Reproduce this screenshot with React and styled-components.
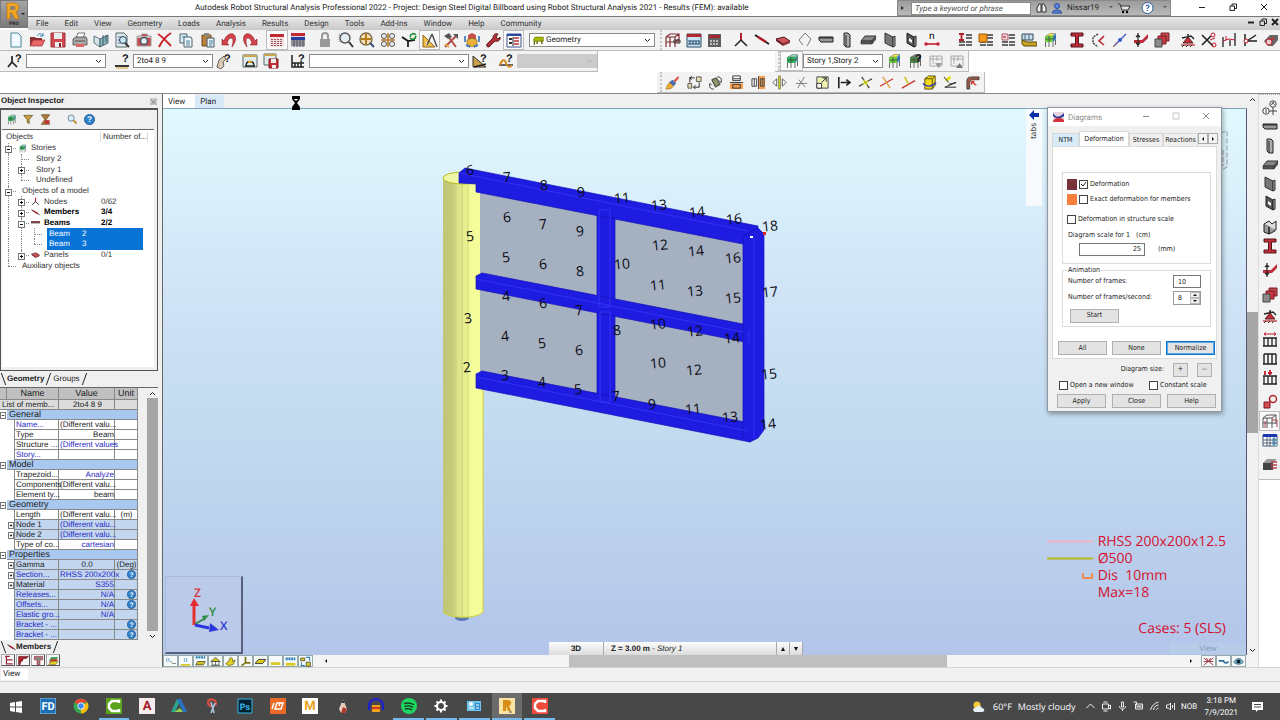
import React from 'react';
import styled, { createGlobalStyle, css } from 'styled-components';

const ui = "Roboto, 'Open Sans', sans-serif";
const dialogFont = "'DejaVu Sans Condensed', 'Open Sans', sans-serif";
const classic = "'Liberation Sans', Arial, sans-serif";
const wide = "'Open Sans', 'Noto Sans', sans-serif";

const GlobalStyle = createGlobalStyle`
  * { box-sizing: border-box; }
  body {
    margin: 0;
    background: #f0f0f0;
    color: #222;
    font-family: ${ui};
    font-size: 8px;
    line-height: 10px;
    text-rendering: geometricPrecision;
  }
  button, input, select { font: inherit; color: inherit; margin: 0; padding: 0; border-radius: 0; text-rendering: inherit; }
  button { background: none; border: 0; white-space: nowrap; }
`;

/* ---------- icons ---------- */

const building = (a, b, c) => (
  <>
    <path d="M4 4 8 1.500h5.500L10 4Z" fill={a} stroke="#444" strokeWidth=".4" />
    <path d="M3 4h8v6H3Z" fill={b} />
    <path d="M11 4l3-2.500v6L11 10Z" fill={c} />
    <path d="M3 7h8l3-2.500M7 4v6M3.500 10v5M7 10v5M11 10v5M13.500 8v5" stroke="#444" strokeWidth=".8" fill="none" />
  </>
);

const question = (
  <text x="8" y="9" fontSize="11" fontWeight="bold" fontFamily="Liberation Sans" fill="#111">?</text>
);

const stackRows = (
  <path d="M9 3h6M9 6h6M2 10h6M9 10h6M2 13h6M9 13h6" stroke="#666" strokeWidth="2" fill="none" />
);

const loadComb = <path d="M2 6v8h12V6M6 6v8M10 6v8M1 6h14M1 14h14" stroke="#222" strokeWidth="1.300" fill="none" />;

const drawings = {
  newFile: <path d="M3 1h7l3 3v11H3Z" fill="#f2fbff" stroke="#4b8298" />,
  open: <><path d="M1 5h5l1 1h6v8H1Z" fill="#8e3234" /><path d="M4 8h12l-3 6H1Z" fill="#e9666a" stroke="#8b2326" strokeWidth=".6" /><path d="M8 4c2-3 4-3 6 0M14 1v3h-3" fill="none" stroke="#3b82b4" /></>,
  save: <><path d="M1 1h14v14H1Z" fill="#d0484d" stroke="#9d3338" /><path d="M4 1h8v6H4ZM5 10h7v5H5Z" fill="#e9eef1" /><path d="M9 11h2v4H9Z" fill="#823" /></>,
  print: <><path d="M4 6l2-5h7l-2 5" fill="#fff" stroke="#555" strokeWidth=".8" /><path d="M1 7l3-2h10l1 2v6H1Z" fill="#a9a9a9" stroke="#444" strokeWidth=".8" /><path d="M3 9h10" stroke="#555" /><path d="M4 12h8v3H4Z" fill="#d66" /></>,
  report: <><path d="M1 4l6 3v8l-6-4Z" fill="#d5e4e7" stroke="#456" strokeWidth=".8" /><path d="M7 7l8-4v8l-8 4Z" fill="#8fb3bb" stroke="#356" strokeWidth=".8" /><path d="M10 3v10M13 3v7" stroke="#355c66" /></>,
  preview: <><path d="M2 1h8l3 3v11H2Z" fill="#e1eaee" stroke="#566" /><path d="M4 5h5M4 8h3M4 11h3" stroke="#57a" /><circle cx="9" cy="8" r="3.500" fill="#c3e4f2" stroke="#345" /><path d="M11 11l4 4" stroke="#333" strokeWidth="2" /></>,
  camera: <><path d="M1 4h4l1-2h5l1 2h3v10H1Z" fill="#cf4b50" stroke="#9a9a9a" /><path d="M1 4h14v2H1Z" fill="#bbb" /><circle cx="8" cy="9" r="3.500" fill="#e6f2f6" stroke="#456" strokeWidth="1.500" /></>,
  remove: <path d="M1 2c5 3 9 8 13 12M14 1C9 4 5 9 2 15" stroke="#c8242c" strokeWidth="2" fill="none" />,
  copy: <><path d="M2 2h7v9H2Z" fill="#dbeaf0" stroke="#4d6570" /><path d="M6 5h7l1 2v8H6Z" fill="#eef6f9" stroke="#4d6570" /><path d="M8 9h4M8 11h4M8 13h4M4 5h3" stroke="#467ea0" /></>,
  paste: <><path d="M2 3h9v11H2Z" fill="#b9823c" stroke="#754a1b" /><path d="M4 1h5v3H4Z" fill="#888" /><path d="M7 6h7v9H7Z" fill="#e9f2f6" stroke="#456" /><path d="M9 9h4M9 11h4M9 13h3" stroke="#467ea0" /></>,
  undo: <path d="M1 13V7l2 2C5 3 9 1 12 2c4 2 3 8-1 13 1-4 2-9-1-9-2 0-3 2-4 5l2 2Z" fill="#d3424a" stroke="#8d1e26" strokeWidth=".6" />,
  redo: <path d="M15 13V7l-2 2C11 3 7 1 4 2 0 4 1 10 5 15 4 11 3 6 6 6c2 0 3 2 4 5l-2 2Z" fill="#d3424a" stroke="#8d1e26" strokeWidth=".6" />,
  calc: <><path d="M1 2h14v13H1Z" fill="#f2e1e1" /><path d="M1 2h14v3H1Z" fill="#c22a33" /><path d="M3 7v7M6 7v7M9 7v7M12 7v7" stroke="#a2505a" strokeWidth="2" strokeDasharray="1 1" /></>,
  calcTable: <><path d="M1 1h14v14H1Z" fill="#d5d5da" /><path d="M1 1h14v3H1Z" fill="#c22a33" /><path d="M1 5h14v3H1Z" fill="#263d9b" /><path d="M1 9h14M1 11h14M1 13h14M4 8v7M7 8v7M10 8v7M13 8v7" stroke="#53535d" /></>,
  lock: <><path d="M3 7h10v8H3Z" fill="#989898" /><path d="M5 8V4c0-4 6-4 6 0v4" fill="none" stroke="#989898" strokeWidth="2" /></>,
  zoomWin: <><path d="M1 2h8v8H1Z" stroke="#999" strokeDasharray="1 1" fill="none" /><circle cx="7" cy="6" r="5" fill="#e4eef2" stroke="#555" strokeWidth="1.400" /><path d="M11 10l4 5" stroke="#333" strokeWidth="2" /></>,
  zoomPan: <><circle cx="7" cy="7" r="6" fill="#f3dfb8" stroke="#7d6a45" strokeWidth="1.400" /><path d="M7 2v10M2 7h10" stroke="#b77a19" strokeWidth="2" /><path d="M11 11l4 4" stroke="#36517d" strokeWidth="2" /></>,
  zoomAll: <><circle cx="4" cy="4" r="2.500" fill="#eee" stroke="#555" /><circle cx="12" cy="4" r="2.500" fill="#eee" stroke="#555" /><circle cx="4" cy="12" r="2.500" fill="#eee" stroke="#555" /><circle cx="12" cy="12" r="2.500" fill="#eee" stroke="#555" /><path d="M8 1v14M1 8h14" stroke="#b77a19" strokeWidth="1.500" /></>,
  axes: <><path d="M1 5l6 4 7-1M7 9v6" stroke="#111" strokeWidth="1.700" fill="none" /><path d="M9 5c1-4 4-4 6-2M15 4c-1 4-4 4-6 2" stroke="#1e8a35" strokeWidth="1.700" fill="none" /></>,
  ruler: <><path d="M1 3v12h12Z" fill="#f1c04a" stroke="#8c6316" /><path d="M4 10v2.500h3Z" fill="#fff" /><path d="M10 2L5 13M10 2l5 13" stroke="#555" strokeWidth="1.600" /></>,
  hammer: <><path d="M2 15L13 4M4 3l9 12" stroke="#b0514d" strokeWidth="2" /><path d="M1 4l5-3 3 4-4 2ZM10 2h5v5Z" fill="#555" /><path d="M2 12l4 3" stroke="#e7a53f" strokeWidth="2" /></>,
  cube: <><path d="M8 1l4 2v4l-4 2-4-2V3Z" fill="#c5524a" /><path d="M8 6l5 2v4l-5 3-5-3V8Z" fill="#e9b23b" stroke="#7b541a" strokeWidth=".6" /><path d="M1 4v6M15 4v6M2 13l4 2M14 13l-4 2" stroke="#2c6bb2" strokeWidth="1.500" /></>,
  wrench: <path d="M2 12l6-6c0-4 3-5 5-4l-2 3 2 2 2-2c1 3-2 5-5 4l-6 6c-2 0-3-1-2-3Z" fill="#b2343a" stroke="#5d1b20" />,
  inspector: <><path d="M1 2h14v13H1Z" fill="#fff" stroke="#39508a" /><path d="M1 2h14v2H1Z" fill="#2b4a9b" /><path d="M3 6h3v2H3ZM3 10h3v2H3Z" fill="#333" /><path d="M8 6h5M8 9h5M8 12h5" stroke="#bb3038" strokeWidth="1.600" /><path d="M7 5v9" stroke="#222" /></>,
  geometry: <><path d="M1 6l2-3h12v6H1Z" fill="#a9b800" stroke="#5b6700" strokeWidth=".8" /><path d="M2 9v5M6 9v4M13 8v5" stroke="#5b6700" strokeWidth="2" /></>,
  structFrame: <><path d="M1 5h9v10M1 5v10M1 10h13M5 5v10M1 5l4-3h9v9M10 5l4-3M10 10l4-3" stroke="#822c31" fill="none" strokeWidth="1.200" /><path d="M9 8h6v3H9Z" fill="none" stroke="#444" /></>,
  frameGray: <><path d="M1 5h9v10M1 5v10M1 10h13M5 5v10M1 5l4-3h9v9M10 5l4-3" stroke="#555" fill="none" /><path d="M10 7h5v7M3 15V8" stroke="#b2404a" fill="none" /></>,
  tableFem: <><path d="M1 2h14v13H1Z" fill="#c8e3f0" stroke="#2d4f66" /><path d="M1 2h14v3H1Z" fill="#b6242c" /><path d="M2 9h12M2 12h12M4 9v3M7 9v3M10 9v3M13 9v3" stroke="#246" /></>,
  machine: <><path d="M1 2h13v13H1Z" fill="#606060" /><path d="M2 3h11v3H2Z" fill="#a32730" /><path d="M3 9h9M3 12h9" stroke="#ddd" strokeDasharray="2 1" strokeWidth="1.500" /></>,
  node: <><path d="M8 1v8" stroke="#b31d2c" strokeWidth="2" /><path d="M8 8l-6 6M8 8l6 6" stroke="#222" strokeWidth="1.500" /></>,
  bar: <><path d="M1 3l14 9" stroke="#111" strokeWidth="1.600" /><path d="M4 5l8 5" stroke="#b31d2c" strokeWidth="2.400" /></>,
  beamLine: <><path d="M0 7h16" stroke="#7d2b33" strokeWidth="3" /><path d="M0 9h16" stroke="#222" /></>,
  slab: <><path d="M1 7l8-2 6 4-7 3Z" fill="#d0565b" stroke="#531b20" /><path d="M1 7v2l7 5v-2Z" fill="#6b2429" /><path d="M8 12l7-3v2l-7 3Z" fill="#97363c" /></>,
  polyline: <path d="M8 1L2 8l4 5M8 1l6 6-4 7" stroke="#777" fill="none" />,
  beamH: <><path d="M1 5h14v5H3L1 8Z" fill="#999" stroke="#222" /><path d="M1 5h14v1.500H1Z" fill="#333" /></>,
  colV: <><path d="M5 1h4l2 2v12H7l-2-2Z" fill="#aaa" stroke="#222" /><path d="M7 3v12" stroke="#222" /></>,
  plate: <><path d="M5 4h11l-4 5H1Z" fill="#888" stroke="#333" /><path d="M1 9h11v3H1ZM12 9l4-5v3l-4 5Z" fill="#555" stroke="#333" strokeWidth=".6" /></>,
  wall: <><path d="M3 1l8 4v10l-8-4Z" fill="#777" stroke="#333" /><path d="M11 5l2-1v10l-2 1Z" fill="#aaa" stroke="#333" /></>,
  wallHole: <><path d="M4 1l7 4v10l-7-4Z" fill="#555" stroke="#222" /><path d="M6 6l3 2v3L6 9Z" fill="#fff" /><path d="M11 5l2-1v10l-2 1Z" fill="#aaa" stroke="#222" /></>,
  dimension: <><path d="M1 12h14" stroke="#c01c2b" strokeWidth="1.600" /><circle cx="2" cy="12" r="1.700" fill="#c01c2b" /><circle cx="14" cy="12" r="1.700" fill="#c01c2b" /><text x="5" y="7" fontSize="10" fontFamily="Liberation Sans">n</text></>,
  sectionList: <>{stackRows}<path d="M2 2h5M2 8h5M4.500 2v6" stroke="#b3202c" strokeWidth="1.800" /></>,
  materialList: <>{stackRows}<path d="M1 2h8v8H1Z" fill="#f39a1c" stroke="#9c5b09" /></>,
  offsetList: <>{stackRows}<path d="M2 2h6v6H2Z" fill="#eed8da" stroke="#b65961" /><path d="M3 5h3" stroke="#b02" /></>,
  truck: <><path d="M1 2h11v6H1Z" fill="#c6e2ef" stroke="#345" /><path d="M1 8l5 2h10v4H3L1 12Z" fill="#caa424" stroke="#5d4a0d" /><path d="M4 2v6M8 2v6" stroke="#567" /></>,
  building: building('#f4ef4a', '#6ccf3b', '#3b82c4'),
  buildingGreen: building('#8fd8c4', '#2fb45a', '#4f9f96'),
  buildingQ: <>{building('#888', '#4c8d45', '#555')}{question}</>,
  ibeam: <><path d="M2 1h12v3H9.500v8H14v3H2v-3h4.500V4H2Z" fill="#c22e37" stroke="#541519" /></>,
  angle: <><path d="M8 2L3 5v6l5 4" stroke="#444" fill="none" strokeWidth="1.500" strokeDasharray="2 1" /><path d="M14 4L9 9l5 4" stroke="#bb2533" fill="none" strokeWidth="1.600" /></>,
  dotline: <><path d="M2 14L14 2" stroke="#4863b8" strokeWidth="1.500" /><circle cx="8" cy="8" r="2" fill="#3c5cd0" /><path d="M1 15l5-5" stroke="#c33" strokeDasharray="2 1" /></>,
  bracketRed: <><path d="M1 8h8l6-6v4l-5 5H1Z" fill="#bd2c37" /><path d="M5 1v14M3 5l2-2 2 2M3 11l2 2 2-2" stroke="#222" fill="none" strokeWidth="1.200" /></>,
  stack: <><path d="M7 1h8v8H7Z" fill="#ba4850" stroke="#7b1d25" /><path d="M4 4h8v8H4Z" fill="#c9353f" stroke="#7b1d25" /><path d="M1 7h7v8H1Z" fill="#8b8b8b" stroke="#444" /></>,
  support: <><path d="M2 6l9-2 3 3M8 5V2" stroke="#222" fill="none" strokeWidth="1.400" /><path d="M8 5l5 6H3Z" fill="#c22e37" stroke="#5a161c" /><path d="M1 12h14v2H1Z" fill="#c77" /><path d="M2 15l2-2M6 15l2-2M10 15l2-2" stroke="#333" /></>,
  release: <><path d="M1 3l11 11M1 13L10 4" stroke="#222" strokeWidth="1.600" /><circle cx="12" cy="3" r="2" fill="none" stroke="#c01c2b" /><circle cx="13" cy="13" r="2" fill="none" stroke="#c01c2b" /><path d="M9 8l5-2" stroke="#c01c2b" /></>,
  releaseBar: <><path d="M2 5v10M14 1v13M9 8v6" stroke="#333" strokeWidth="1.400" /><path d="M2 9l6-2 6 1M5 8V4" stroke="#c01c2b" fill="none" /></>,
  hinge: <><path d="M3 2v12M5 9l9-6M5 9h10" stroke="#222" fill="none" strokeWidth="1.500" /><circle cx="4" cy="9" r="2" fill="#fff" stroke="#c01c2b" /></>,
  linear: <><path d="M1 9l6-6h8v5l-5 6H5Z" fill="#666" /><path d="M5 10l6-4" stroke="#c33" strokeWidth="2" /><circle cx="6" cy="10" r="3" fill="#ebc9c9" stroke="#c01c2b" /></>,
  nodeQ: <><path d="M5 3v6l-4 5M5 9l5 5" stroke="#222" strokeWidth="1.700" fill="none" />{question}</>,
  barQ: <><path d="M1 13h14" stroke="#222" strokeWidth="1.800" /><path d="M2 15h12" stroke="#d6a23a" />{question}</>,
  handQ: <><path d="M1 14l2-7 5-4 2 3-3 3 1 4-3 3Z" fill="#d9c9b5" stroke="#444" strokeWidth=".8" />{question}</>,
  caseA: <><path d="M1 2h14v12H1Z" fill="#e3edf0" stroke="#566" /><path d="M1 2h14v2H1Z" fill="#c9a64b" /><path d="M4 13c0-6 8-6 8 0M3 13h10" stroke="#222" fill="none" strokeWidth="1.300" /><path d="M6 9h4" stroke="#d89a22" strokeWidth="2" /></>,
  caseB: <><path d="M1 1h12v11H1Z" fill="#e3edf0" stroke="#566" /><path d="M1 1h12v2H1Z" fill="#c9a64b" /><path d="M6 6h9v9H6Z" fill="#c92f35" stroke="#7f1f24" /><path d="M8 6h5v4H8ZM9 12h4v3H9Z" fill="#eee" /></>,
  loadQ: <><path d="M2 2v12h12M2 10h12M5 10v4M8 10v4M11 10v4" stroke="#222" strokeWidth="1.500" fill="none" />{question}</>,
  modeQ: <><path d="M1 3v11h13Z" fill="#c6a04a" stroke="#333" /><path d="M2 14l12-3" stroke="#222" strokeWidth="1.500" />{question}</>,
  resultQ: <><path d="M1 12h14" stroke="#222" strokeWidth="1.400" /><path d="M2 12c2-6 5-6 6-2s4 5 6 2" stroke="#d58c22" fill="none" strokeWidth="2" />{question}</>,
  filterDown: <><path d="M2 3h12v10H2ZM5 3v8M9 3v5M2 6h12" stroke="#aaa" fill="none" /><path d="M7 10h7l-3.500 5Z" fill="#999" /></>,
  filterUp: <><path d="M2 3h12v10H2ZM5 3v8M9 3v5M2 6h12" stroke="#aaa" fill="none" /><path d="M7 15h7l-3.500-5Z" fill="#777" /></>,
  brush: <><path d="M14 1l-5 5 2 2 4-5Z" fill="#d8553e" /><path d="M8 5l4 4-3 3-5-4Z" fill="#436fb8" /><path d="M5 8l4 4c-2 3-5 3-8 3 1-2 1-5 4-7Z" fill="#e8ae35" stroke="#9a661a" strokeWidth=".6" /></>,
  move: <><path d="M10 2h5v5h-5ZM1 9h4v5H1Z" fill="#e3dcae" stroke="#555" /><path d="M3 8V3h5M3 3l2-2M3 3l2 2M13 8v5H7M7 13l2-2M7 13l2 2" stroke="#222" fill="none" /></>,
  rotate: <><path d="M4 5l5-2 4 7-5 3Z" fill="#90936b" stroke="#333" /><path d="M10 2c4 0 5 3 4 6M14 8l-2-2M6 15c-4 0-5-3-4-6M2 9l2 2" stroke="#222" fill="none" /></>,
  mirrorH: <><path d="M1 9h14v6H1Z" fill="#f3a14e" /><path d="M4 1h8v5H4Z" fill="#fff" stroke="#333" /><path d="M4 10h8v4H4ZM1 8h14M4 4h8" stroke="#333" fill="none" /></>,
  mirrorV: <><path d="M8 1h7v14H8Z" fill="#f3a14e" /><path d="M1 4h5v8H1ZM10 4h4v8h-4ZM8 1v14M3.500 4v8M12 4v8" stroke="#444" fill="none" /></>,
  mirrorAxis: <><path d="M7 1h2v14H7Z" fill="#d6d80f" stroke="#555" strokeWidth=".6" /><path d="M5 4v8L1 8ZM11 4v8l4-4Z" fill="#fff" stroke="#555" /></>,
  trim: <><path d="M2 9h12M4 14l7-12M5 5l7 8" stroke="#777" /></>,
  scale: <><path d="M2 2h12v12H2Z" fill="#eef3b4" stroke="#444" /><path d="M2 9h5v5H2Z" fill="#fff" stroke="#333" /><path d="M7 8l5-5M8 3h4v4" stroke="#222" fill="none" /></>,
  divide: <path d="M3 2v12M5 8h10M11 5l4 3-4 3" stroke="#222" strokeWidth="1.700" fill="none" />,
  crossBlack: <><path d="M1 12l14-8M4 2l8 12" stroke="#333" strokeWidth="1.200" /><path d="M5 10l6-4M6 5l4 6" stroke="#d2d419" strokeWidth="1.500" /></>,
  crossRed: <><path d="M1 12l14-8" stroke="#c33" strokeWidth="1.400" /><path d="M4 2l8 12" stroke="#dd9a2b" strokeWidth="1.300" /></>,
  crossYellow: <><path d="M1 14l14-8" stroke="#c33" strokeWidth="1.400" /><path d="M4 2l4 8" stroke="#cfc21d" strokeWidth="1.600" /></>,
  box: <><path d="M3 4l4-3h7v10l-3 4H3Z" fill="#f2d91e" stroke="#5b4d09" /><path d="M3 4h8v11M11 4l3-3" stroke="#5b4d09" fill="none" /><path d="M1 9c3 4 10 4 14-1" stroke="#3540b0" fill="none" strokeWidth="1.500" /></>,
  extend: <><path d="M3 6l5-4" stroke="#e3e314" strokeWidth="3" /><path d="M1 2l5 6M2 13h12M2 13l12-5M6 10l8-2" stroke="#222" fill="none" /></>,
  corner: <><path d="M2 15V6c0-3 2-4 5-4h8v3H9c-3 0-4 1-4 4v6Z" fill="#9c5848" stroke="#333" strokeWidth=".8" /><path d="M7 7l5 4M7 7h3M7 7v3" stroke="#c33" strokeWidth="1.500" fill="none" /></>,
  gridAxes: <><circle cx="11" cy="4" r="3.200" fill="#fff" stroke="#444" /><circle cx="4" cy="11" r="3.200" fill="#fff" stroke="#444" /><path d="M11 7v8M7 11h8M4 9v4M9.500 5l1.500-3 1.500 3" stroke="#444" fill="none" /></>,
  openBox: <><path d="M2 5l5 2v8l-5-2ZM7 7l6-3v8l-6 3Z" fill="#999" stroke="#222" /><path d="M2 5l5-3 3 3 4-3v9" fill="#ddd" stroke="#222" /></>,
  loadA: <>{loadComb}<path d="M2 2h12M4 .5L2 2l2 1.500M12 .5L14 2l-2 1.500" stroke="#c01c2b" fill="none" /></>,
  loadB: <><path d="M2 3h12M2 3v10M6 3v10M10 3v10M14 3v10M1 13h14" stroke="#222" strokeWidth="1.400" fill="none" /></>,
  loadC: <>{loadComb}<path d="M3 1v4M8 0v5M6 3h4" stroke="#c01c2b" strokeWidth="1.800" /></>,
  copyRed: <><path d="M2 8h6v6H2Z" fill="#d04b52" stroke="#7d1c24" /><circle cx="11" cy="5" r="3.500" fill="none" stroke="#b52530" strokeWidth="1.500" /><path d="M6 9l3-3" stroke="#c33" /></>,
  table: <><path d="M1 3h14v11H1Z" fill="#fff" stroke="#456" /><path d="M1 2h14v3H1Z" fill="#1b39ae" /><path d="M10 6h5v8h-5Z" fill="#8fd0ee" /><path d="M1 8h14M1 11h14M5 5v9M8 5v9M12 5v9" stroke="#567" /></>,
  solid: <><path d="M1 7l4-4h10l-4 4Z" fill="#999" /><path d="M1 7h10v7H1Z" fill="#444" /><path d="M9 6h6M9 9h6M9 12h6" stroke="#b7404b" strokeWidth="1.300" /></>,
  funnel: <path d="M1 2h13L9 8v6l-3-2V8Z" fill="#c9a13f" stroke="#5e481a" />,
  funnelX: <><path d="M2 1h12L9 8l5 7H2l5-7Z" fill="#b07c3c" stroke="#5e481a" /><path d="M7 9h7v5H7Z" fill="#c2333a" /></>,
  magnify: <><circle cx="6" cy="6" r="4.500" fill="#d9ecf8" stroke="#66809c" strokeWidth="1.300" /><path d="M9 9l5 5" stroke="#b88b2b" strokeWidth="2.400" /></>,
  help: <><circle cx="8" cy="8" r="7.500" fill="#2f7fc8" stroke="#1c4f87" /><text x="8" y="12" textAnchor="middle" fontSize="12" fontWeight="bold" fontFamily="Liberation Sans" fill="#fff">?</text></>,
  labelN: <><text x="1" y="9" fontSize="10" fontFamily="Liberation Sans" fill="#277fb8">n</text><path d="M8 7l3 4h5" stroke="#555" fill="none" /></>,
  labelLine: <><text x="5" y="9" fontSize="10" fontFamily="Liberation Sans" fill="#277fb8">n</text><path d="M1 13h14" stroke="#d3c41b" strokeWidth="2.400" /></>,
  labelNum: <><path d="M1 2h14" stroke="#277fb8" strokeWidth="3" strokeDasharray="3 1" /><path d="M4 8h11l-3 5H1Z" fill="#d3c41b" stroke="#333" /></>,
  home: <><path d="M1 8l7-6 7 6Z" fill="#d3c41b" stroke="#444" /><path d="M3 8h10v5H3ZM1 14h14M8 8v5" stroke="#444" fill="none" /></>,
  solidYellow: <path d="M1 11l4-3 3-6 3 2v4l4-2-3 6-7 2Z" fill="#e3d423" stroke="#55500f" />,
  axesYellow: <><path d="M8 1v9l-6 4M8 10h7" stroke="#7d7414" strokeWidth="2.500" fill="none" /></>,
  slabYellow: <path d="M5 5h11l-5 6H0Z" fill="#d9cc1c" stroke="#333" strokeWidth="1.300" />,
  lineYellow: <path d="M1 11h14" stroke="#d8cb22" strokeWidth="4" />,
  numYellow: <><path d="M1 4h14" stroke="#277fb8" strokeWidth="4" strokeDasharray="3 1" /><path d="M1 12h14" stroke="#d8cb22" strokeWidth="4" /></>,
  swap: <><path d="M1 3h6v4H1ZM9 9h6v6H9Z" fill="#d8cb22" stroke="#333" /><path d="M9 2h5v5M2 9v5h5" stroke="#277fb8" fill="none" strokeWidth="1.500" /></>,
  tree: <path d="M5 2h5M5 2v11h9M5 7h8M3 2h3M11 7h3" stroke="#9c2a3f" strokeWidth="1.800" fill="none" />,
  flagRed: <path d="M1 2h14l-3 3H8l-2 4H4l-1 5H1Z" fill="#b3202c" stroke="#55151a" />,
  tee: <path d="M2 2h12v5h-4v7H6V7H2Z" fill="#888" stroke="#b3202c" />,
  layers: <><path d="M5 3h10l-4 5H1Z" fill="#3fa15b" /><path d="M5 6h10l-4 5H1Z" fill="#d33" /><path d="M5 9h10l-4 5H1Z" fill="#e3d423" stroke="#333" strokeWidth=".6" /></>,
  spider: <path d="M1 3l14 10M1 13L15 3M1 8h14M5 3l3 5M11 3l-3 5" stroke="#a02b38" strokeWidth="1.300" fill="none" />,
  wave: <path d="M1 7h7c1 4 5 4 7 1" stroke="#2f6c9b" fill="none" strokeWidth="2.400" />,
  eye: <><path d="M1 9c4-7 11-7 14 0-4 4-10 4-14 0Z" fill="#7fc3df" stroke="#245" /><circle cx="8" cy="8" r="3" fill="#123" /></>,
};

const Icon = ({ name, size = 16 }) => (
  <svg width={size} height={size} viewBox="0 0 16 16" aria-hidden="true">{drawings[name]}</svg>
);

/* ---------- shared parts ---------- */

const Page = styled.div`
  display: flex;
  flex-direction: column;
  height: 100vh;
  overflow: hidden;
`;

const ToolButton = styled.button`
  flex: 1 1 0;
  min-width: 0;
  min-height: 0;
  display: flex;
  align-items: center;
  justify-content: center;
  border: 1px solid ${(p) => (p.$on ? '#bdbdbd' : 'transparent')};
  background: ${(p) => (p.$on ? '#fafafa' : 'transparent')};
  svg { flex: none; }
`;

const ToolGroup = styled.div`
  display: flex;
  flex-direction: ${(p) => (p.$vertical ? 'column' : 'row')};
  flex: 0 0 ${(p) => p.$length}px;
  min-width: 0;
  ${(p) => p.$handle && css`
    border-left: 2px dotted #c4c4c4;
  `}
`;

const Tools = ({ names, length, active = [], size, vertical, handle }) => (
  <ToolGroup $length={length} $vertical={vertical} $handle={handle}>
    {names.map((n) => (
      <ToolButton key={n} type="button" aria-label={n} $on={active.includes(n)}>
        <Icon name={n} size={size} />
      </ToolButton>
    ))}
  </ToolGroup>
);

const ComboWrap = styled.span`
  display: flex;
  align-items: center;
  flex: 0 0 ${(p) => p.$width}px;
  height: 14px;
  padding: 0 3px;
  gap: 2px;
  border: 1px solid ${(p) => (p.$off ? '#ccc' : '#8a8a8a')};
  background: ${(p) => (p.$off ? '#ccc' : '#fff')};
  color: ${(p) => (p.$off ? '#aaa' : '#222')};
  svg { flex: none; }
`;

const ComboSelect = styled.select`
  appearance: none;
  flex: 1;
  min-width: 0;
  border: 0;
  background: transparent;
  outline: 0;
  font-size: 8px;
`;

const Chevron = ({ up }) => (
  <svg width="7" height="5" viewBox="0 0 7 5" aria-hidden="true">
    <path d={up ? 'M1 4l2.500-2.500L6 4' : 'M1 1l2.500 2.500L6 1'} stroke="currentColor" fill="none" />
  </svg>
);

const Combo = ({ label, value, width, icon, off }) => (
  <ComboWrap $width={width} $off={off}>
    {icon && <Icon name={icon} size={11} />}
    <ComboSelect aria-label={label} disabled={off}>
      <option>{value}</option>
    </ComboSelect>
    <Chevron />
  </ComboWrap>
);

/* ---------- title bar and menu ---------- */

const Header = styled.header`
  display: grid;
  grid-template-columns: 28px 1fr;
  flex: 0 0 30px;
  background: #fff;
`;

const AppButton = styled.button`
  display: flex;
  flex-direction: column;
  align-items: center;
  justify-content: center;
  height: 28px;
  background: linear-gradient(#a5a5a5, #7c7c7c);
  border: 1px solid #777;
`;

const TitleBar = styled.div`
  display: flex;
  align-items: center;
  height: 16px;
`;

const Title = styled.h1`
  flex: 1;
  margin: 0;
  padding-left: 167px;
  font-size: 8px;
  font-weight: 400;
  white-space: nowrap;
`;

const SearchBox = styled.div`
  display: flex;
  align-items: center;
  gap: 5px;
  flex: 0 0 274px;
  height: 16px;
  padding: 0 3px;
  background: linear-gradient(#9c9c9c, #b9b9b9);
  border: 1px solid #8a8a8a;
`;

const SearchInput = styled.input`
  width: 120px;
  height: 13px;
  padding: 0 3px;
  border: 1px solid #888;
  background: #fff;
  font-style: italic;
  &::placeholder { color: #555; }
`;

const UserName = styled.span`
  flex: 1;
`;

const Tri = styled.span`
  border: 2px solid transparent;
  border-left-width: ${(p) => (p.$right ? '3px' : '2px')};
  border-left-color: ${(p) => (p.$right ? '#333' : 'transparent')};
  border-top-color: ${(p) => (p.$right ? 'transparent' : '#555')};
`;

const WindowButtons = styled.div`
  display: flex;
  flex: 0 0 109px;
  padding-left: 15px;
  button { flex: 1; }
`;

const MenuBar = styled.nav`
  display: flex;
  align-items: center;
  gap: 16px;
  height: 14px;
  padding-left: 8px;
  background: linear-gradient(#e8e8e8, #c9c9c9);
  border-top: 1px solid #777;
`;

const MenuLink = styled.a`
  color: #333;
  text-decoration: none;
`;

const MdiButtons = styled.div`
  display: flex;
  gap: 4px;
  margin-left: auto;
  padding-right: 1px;
`;

const glyphs = {
  min: 'M1 4.500h6',
  rest: 'M1 3h4.500v4.500H1ZM3 3V1h4.500v4.500H6',
  max: 'M1 1h6v6H1Z',
  close: 'M1 1l6 6M7 1L1 7',
};

const Glyph = ({ kind, width = 1 }) => (
  <svg width="8" height="8" viewBox="0 0 8 8" aria-hidden="true">
    <path d={glyphs[kind]} fill="none" stroke="currentColor" strokeWidth={width} />
  </svg>
);

const menus = ['File', 'Edit', 'View', 'Geometry', 'Loads', 'Analysis', 'Results', 'Design', 'Tools', 'Add-Ins', 'Window', 'Help', 'Community'];

const AppHeader = () => (
  <Header>
    <AppButton type="button" aria-label="Application menu">
      <svg width="26" height="26" viewBox="0 0 26 26">
        <path d="M6 2h7c6 0 6 7 2 9l3 7h-4l-3-6H9v6H6Z" fill="#f5a623" stroke="#b56a05" strokeWidth=".6" />
        <path d="M9 5h4c2 0 2 4 0 4H9Z" fill="#94826a" />
        <path d="M20 12h4l-2 2Z" fill="#222" />
        <text x="13" y="24" textAnchor="middle" fontSize="5" fontWeight="bold" fontFamily="Roboto" fill="#222">PRO</text>
      </svg>
    </AppButton>
    <div>
      <TitleBar>
        <Title>Autodesk Robot Structural Analysis Professional 2022 - Project: Design Steel Digital Billboard using Robot Structural Analysis 2021 - Results (FEM): available</Title>
        <SearchBox>
          <Tri $right />
          <SearchInput aria-label="Search" placeholder="Type a keyword or phrase" />
          <svg width="11" height="10" viewBox="0 0 11 10"><path d="M1 9V5l2-4h2v8ZM6 9V1h2l2 4v4Z" fill="#eee" stroke="#333" /></svg>
          <svg width="10" height="11" viewBox="0 0 10 11"><circle cx="5" cy="3" r="2.500" fill="#5a86e0" stroke="#274a9a" /><path d="M0 10c1-4 9-4 10 0Z" fill="#5a86e0" stroke="#274a9a" /></svg>
          <UserName>Nissar19</UserName>
          <Tri />
          <svg width="13" height="11" viewBox="0 0 13 11"><path d="M0 1h2l2 6h6l2-4H3" fill="#dfe6ee" stroke="#333" /><circle cx="5" cy="9" r="1.200" /><circle cx="9" cy="9" r="1.200" /></svg>
          <svg width="22" height="12" viewBox="-5 0 17 12"><circle cx="4" cy="6" r="5.500" fill="#fff" stroke="#2f5f9d" /><text x="4" y="9" textAnchor="middle" fontSize="9" fontWeight="bold" fill="#2f5f9d" fontFamily="Roboto">?</text></svg>
          <Tri />
        </SearchBox>
        <WindowButtons>
          <button type="button" aria-label="Minimize"><Glyph kind="min" /></button>
          <button type="button" aria-label="Restore"><Glyph kind="rest" /></button>
          <button type="button" aria-label="Close"><Glyph kind="close" /></button>
        </WindowButtons>
      </TitleBar>
      <MenuBar>
        {menus.map((m) => <MenuLink href="#" key={m}>{m}</MenuLink>)}
        <MdiButtons>
          <button type="button" aria-label="Minimize view"><Glyph kind="min" width={2} /></button>
          <button type="button" aria-label="Restore view"><Glyph kind="rest" /></button>
          <button type="button" aria-label="Close view"><Glyph kind="close" width={2} /></button>
        </MdiButtons>
      </MenuBar>
    </div>
  </Header>
);

/* ---------- toolbars ---------- */

const ToolRow = styled.div`
  display: flex;
  align-items: stretch;
  flex: 0 0 21px;
  background: ${(p) => (p.$plain ? '#fff' : '#f3f3f3')};
`;

const Bar = styled.div`
  display: flex;
  align-items: stretch;
  gap: ${(p) => p.$gap || 0}px;
  flex: ${(p) => (p.$width ? `0 0 ${p.$width}px` : '1')};
  padding-left: ${(p) => p.$pad || 0}px;
  background: #f3f3f3;
  border-bottom: 1px solid #bbb;
  border-right: 1px solid #bbb;
  ${ComboWrap} { align-self: center; }
`;

const Gap = styled.div`
  flex: 0 0 ${(p) => p.$width}px;
`;

const Toolbars = () => (
  <>
    <ToolRow>
      <Bar $gap={5} $pad={5}>
        <Tools length={256} names={['newFile', 'open', 'save', 'print', 'report', 'preview', 'camera', 'remove', 'copy', 'paste', 'undo', 'redo']} />
        <Tools length={43} names={['calc', 'calcTable']} active={['calc']} />
        <Tools length={210} names={['lock', 'zoomWin', 'zoomPan', 'zoomAll', 'axes', 'ruler', 'hammer', 'cube', 'wrench', 'inspector']} active={['ruler', 'inspector']} />
        <Combo label="Layout" value="Geometry" icon="geometry" width={126} />
        <Tools length={65} names={['structFrame', 'tableFem', 'machine']} handle />
        <Tools length={213} names={['node', 'bar', 'slab', 'polyline', 'beamH', 'colV', 'plate', 'wall', 'wallHole', 'dimension']} />
        <Gap $width={1} />
        <Tools length={107} names={['sectionList', 'materialList', 'offsetList', 'truck', 'building']} />
        <Tools length={107} names={['ibeam', 'angle', 'dotline', 'bracketRed', 'stack']} />
        <Tools length={103} names={['support', 'release', 'releaseBar', 'hinge', 'linear']} />
      </Bar>
    </ToolRow>
    <ToolRow $plain>
      <Bar $width={598} $pad={4}>
        <Tools length={22} names={['nodeQ']} />
        <Combo label="Node selection" value="" width={80} />
        <Gap $width={5} />
        <Tools length={22} names={['barQ']} />
        <Combo label="Bar selection" value="2to4 8 9" width={80} />
        <Tools length={22} names={['handQ']} />
        <Gap $width={4} />
        <Tools length={43} names={['caseA', 'caseB']} />
        <Gap $width={4} />
        <Tools length={23} names={['loadQ']} />
        <Combo label="Load case" value="" width={160} />
        <Tools length={22} names={['modeQ']} />
        <Gap $width={4} />
        <Tools length={22} names={['resultQ']} />
        <Combo label="Mode" value="" width={80} off />
      </Bar>
      <Gap $width={177} />
      <Bar $width={194} $pad={3}>
        <Tools length={25} names={['buildingGreen']} active={['buildingGreen']} handle />
        <Combo label="Story" value="Story 1,Story 2" width={80} />
        <Tools length={85} names={['building', 'buildingQ', 'filterDown', 'filterUp']} />
      </Bar>
    </ToolRow>
    <ToolRow $plain>
      <Gap $width={657} />
      <Bar $width={328} $pad={3}>
        <Tools length={323} size={15} handle names={['brush', 'move', 'rotate', 'mirrorH', 'mirrorV', 'mirrorAxis', 'trim', 'scale', 'divide', 'crossBlack', 'crossRed', 'crossYellow', 'box', 'extend', 'corner']} />
      </Bar>
    </ToolRow>
  </>
);

/* ---------- left panel ---------- */

const Workspace = styled.main`
  display: flex;
  flex: 1;
  min-height: 0;
  border-top: 1px solid #888;
`;

const Side = styled.aside`
  display: flex;
  flex-direction: column;
  flex: 0 0 158px;
  min-height: 0;
  font-family: ${classic};
`;

const SideHead = styled.div`
  display: flex;
  align-items: center;
  justify-content: space-between;
  flex: 0 0 14px;
  padding: 0 1px;
  font-weight: 700;
  font-size: 8px;
  button {
    width: 7px;
    height: 7px;
    background: #ccc;
    color: #777;
    display: flex;
  }
`;

const Inspector = styled.section`
  display: flex;
  flex-direction: column;
  flex: 0 0 263px;
  border: 1px solid #555;
  border-top: 2px solid #555;
`;

const InspectorTools = styled.div`
  display: flex;
  align-items: center;
  gap: 5px;
  flex: 0 0 19px;
  padding-left: 4px;
  button { flex: 0 0 12px; }
`;

const ObjectTree = styled.div`
  flex: 1;
  background: #fff;
  margin: 0 3px 3px 1px;
  border-top: 1px solid #666;
  color: #333;
`;

const TreeHead = styled.div`
  display: grid;
  grid-template-columns: 94px 48px;
  height: 13px;
  align-items: center;
  padding-left: 4px;
  white-space: nowrap;
  span + span { border-left: 1px solid #ddd; border-right: 1px solid #ddd; padding-left: 2px; }
`;

const TreeBody = styled.div`
  display: grid;
  grid-auto-rows: 1fr;
  height: 128px;
`;

const TreeRow = styled.div`
  display: flex;
  align-items: center;
  width: 141px;
  white-space: pre;
  font-weight: ${(p) => (p.$bold ? 700 : 400)};
  color: ${(p) => (p.$bold ? '#000' : 'inherit')};
`;

const Guide = styled.span`
  align-self: stretch;
  position: relative;
  flex: 0 0 13px;
  &::before {
    content: '';
    position: absolute;
    left: 6px;
    top: 0;
    height: ${(p) => (p.$kind === 'end' ? '50%' : '100%')};
    border-left: 1px dotted #888;
  }
  &::after {
    content: '';
    position: absolute;
    left: 6px;
    right: -1px;
    top: 50%;
    border-top: ${(p) => (p.$kind === 'line' ? '0' : '1px dotted #888')};
  }
`;

const Toggle = styled.button`
  position: absolute;
  z-index: 1;
  left: 3px;
  top: 3px;
  width: 7px;
  height: 7px;
  display: flex;
  background: #fff;
  border: 1px solid #777;
`;

const TogglePlus = ({ open }) => (
  <svg width="5" height="5" viewBox="0 0 5 5" aria-hidden="true">
    <path d={open ? 'M1 2.500h3' : 'M1 2.500h3M2.500 1v3'} stroke="#111" />
  </svg>
);

const TreeIcon = styled.span`
  display: flex;
  justify-content: center;
  flex: 0 0 15px;
`;

const TreeName = styled.span`
  flex: 1;
  padding-left: ${(p) => p.$lead || 1}px;
`;

const Selected = styled.span`
  flex: 1;
  align-self: stretch;
  display: flex;
  align-items: center;
  margin-left: 6px;
  padding-left: 2px;
  gap: 12px;
  background: #0a74d6;
  color: #fff;
`;

const Count = styled.span`
  flex: 0 0 42px;
`;

const treeRows = [
  { guides: ['open'], icon: 'buildingGreen', name: 'Stories' },
  { guides: ['line', 'tee'], name: 'Story 2', lead: 8 },
  { guides: ['line', 'plus'], name: 'Story 1', lead: 8 },
  { guides: ['line', 'end'], name: 'Undefined', lead: 8 },
  { guides: ['open'], name: 'Objects of a model', lead: 7 },
  { guides: ['line', 'plus'], icon: 'node', name: 'Nodes', count: '0/62' },
  { guides: ['line', 'plus'], icon: 'bar', name: 'Members', count: '3/4', bold: true },
  { guides: ['line', 'open'], icon: 'beamLine', name: 'Beams', count: '2/2', bold: true },
  { guides: ['line', 'line', 'tee'], selected: ['Beam', '2'] },
  { guides: ['line', 'line', 'end'], selected: ['Beam', '3'] },
  { guides: ['line', 'plus'], icon: 'slab', name: 'Panels', count: '0/1' },
  { guides: ['end'], name: 'Auxiliary objects', lead: 7 },
];

const TabRow = styled.div`
  display: flex;
  align-items: center;
  flex: 0 0 ${(p) => p.$height}px;
  padding-left: 3px;
`;

const SlantTab = styled.button`
  position: relative;
  display: flex;
  align-items: center;
  height: 12px;
  padding: 0 5px 0 4px;
  font-weight: ${(p) => (p.$on ? 700 : 400)};
  &::after {
    content: '';
    position: absolute;
    right: 0;
    top: 0;
    bottom: 0;
    border-right: 1px solid #222;
    transform: skewX(-20deg);
  }
  ${(p) => p.$on && css`
    &::before {
      content: '';
      position: absolute;
      left: 0;
      top: 0;
      bottom: 0;
      border-left: 1px solid #222;
      transform: skewX(20deg);
    }
  `}
`;

const Props = styled.section`
  display: flex;
  justify-content: space-between;
  flex: 0 0 254px;
  border-top: 1px solid #666;
  overflow: hidden;
`;

const PropTable = styled.table`
  align-self: flex-start;
  width: 138px;
  table-layout: fixed;
  border-collapse: separate;
  border-spacing: 0;
  font-size: 8px;
  line-height: 9px;
  th, td {
    padding: 0;
    border: 0 solid #888;
    border-width: 0 1px 1px 0;
    text-align: left;
    font-weight: 400;
    white-space: nowrap;
  }
`;

const HeadRow = styled.tr`
  && th { background: #c0c0c0; line-height: 11px; text-align: center; font-size: 9px; }
`;

const ListRow = styled.tr`
  && td { background: #dcdcdc; line-height: 9px; padding-left: 2px; }
`;

const Gutter = styled.td`
  && { background: #fff; border-bottom: 0; border-right-color: ${(p) => (p.$last ? '#888' : '#fff')}; }
`;

const SectionCell = styled.td`
  && { background: #a9c8ef; font-size: 9px; padding-left: 2px; }
`;

const Cell = styled.td`
  && {
    background: ${(p) => (p.$tint ? '#c2d6f0' : '#fff')};
    color: ${(p) => (p.$link ? '#2a2ac4' : '#222')};
    text-align: ${(p) => p.$align || 'left'};
    padding-left: 1px;
  }
  svg { display: block; margin: 0 1px 0 auto; }
`;

const SmallToggle = styled.button`
  display: flex;
  width: 6px;
  height: 7px;
  margin-left: auto;
  background: #fff;
  border: 1px solid #777;
`;

const props = [
  { section: 'General' },
  { n: 'Name...', v: '(Different valu...', nl: 1 },
  { n: 'Type', v: 'Beam', a: 'right' },
  { n: 'Structure ...', v: '(Different values', vl: 1 },
  { n: 'Story...', v: '', nl: 1 },
  { section: 'Model' },
  { n: 'Trapezoid...', v: 'Analyze', vl: 1, a: 'right' },
  { n: 'Components', v: '(Different valu...' },
  { n: 'Element ty...', v: 'beam', a: 'right' },
  { section: 'Geometry' },
  { n: 'Length', v: '(Different valu...', u: '(m)' },
  { n: 'Node 1', v: '(Different valu...', vl: 1, t: 1, plus: 1 },
  { n: 'Node 2', v: '(Different valu...', vl: 1, t: 1, plus: 1 },
  { n: 'Type of co...', v: 'cartesian', vl: 1, a: 'right' },
  { section: 'Properties' },
  { n: 'Gamma', v: '0.0', u: '(Deg)', t: 1, plus: 1, a: 'center' },
  { n: 'Section...', v: 'RHSS 200x200x', q: 1, nl: 1, vl: 1, t: 1, plus: 1, a: 'right' },
  { n: 'Material', v: 'S355', vl: 1, t: 1, plus: 1, a: 'right' },
  { n: 'Releases...', v: 'N/A', q: 1, nl: 1, vl: 1, t: 1, a: 'right' },
  { n: 'Offsets...', v: 'N/A', q: 1, nl: 1, vl: 1, t: 1, a: 'right' },
  { n: 'Elastic gro...', v: 'N/A', nl: 1, vl: 1, t: 1, a: 'right' },
  { n: 'Bracket - ...', v: '', q: 1, nl: 1, t: 1 },
  { n: 'Bracket - ...', v: '', q: 1, nl: 1, t: 1 },
];

const VScroll = styled.div`
  display: flex;
  flex-direction: column;
  align-items: center;
  flex: 0 0 11px;
  background: #f0f0f0;
  button { flex: 0 0 10px; display: flex; align-items: center; }
`;

const Thumb = styled.div`
  width: 100%;
  flex: ${(p) => p.$grow};
  background: ${(p) => (p.$fill ? '#a6a6a6' : 'transparent')};
`;

const FootTools = styled.div`
  display: flex;
  align-items: center;
  gap: 1px;
  flex: 1;
  padding-left: 1px;
  button { flex: 0 0 14px; height: 12px; border-color: #aaa #555 #555 #aaa; background: #f8f8f8; }
`;

const SidePanel = () => (
  <Side>
    <SideHead>
      <span>Object Inspector</span>
      <button type="button" aria-label="Close inspector"><Glyph kind="close" /></button>
    </SideHead>
    <Inspector>
      <InspectorTools>
        {['buildingGreen', 'funnel', 'funnelX'].map((n) => <ToolButton key={n} type="button" aria-label={n}><Icon name={n} size={11} /></ToolButton>)}
        <Gap $width={5} />
        {['magnify', 'help'].map((n) => <ToolButton key={n} type="button" aria-label={n}><Icon name={n} size={11} /></ToolButton>)}
      </InspectorTools>
      <ObjectTree>
        <TreeHead><span>Objects</span><span>Number of...</span></TreeHead>
        <TreeBody role="tree">
          {treeRows.map((r, i) => (
            <TreeRow key={i} role="treeitem" $bold={r.bold}>
              {r.guides.map((g, j) => (
                <Guide key={j} $kind={g}>
                  {(g === 'open' || g === 'plus') && (
                    <Toggle type="button" aria-label="Toggle"><TogglePlus open={g === 'open'} /></Toggle>
                  )}
                </Guide>
              ))}
              {r.icon && <TreeIcon><Icon name={r.icon} size={9} /></TreeIcon>}
              {r.selected
                ? <Selected><span>{r.selected[0]}</span><span>{r.selected[1]}</span></Selected>
                : <TreeName $lead={r.lead}>{r.name}</TreeName>}
              {r.count && <Count>{r.count}</Count>}
            </TreeRow>
          ))}
        </TreeBody>
      </ObjectTree>
    </Inspector>
    <TabRow $height={16}>
      <SlantTab type="button" $on>Geometry</SlantTab>
      <SlantTab type="button">Groups</SlantTab>
    </TabRow>
    <Props>
      <PropTable>
        <colgroup><col width="7" /><col width="8" /><col width="44" /><col width="56" /><col width="23" /></colgroup>
        <thead>
          <HeadRow><th /><th colSpan={2}>Name</th><th>Value</th><th>Unit</th></HeadRow>
        </thead>
        <tbody>
          <ListRow><td colSpan={3}>List of memb...</td><Cell $align="center">2to4 8 9</Cell><td /></ListRow>
          {props.map((p, i) => (p.section ? (
            <tr key={i}>
              <Gutter><SmallToggle type="button" aria-label="Collapse"><TogglePlus open /></SmallToggle></Gutter>
              <SectionCell colSpan={4}>{p.section}</SectionCell>
            </tr>
          ) : (
            <tr key={i}>
              <Gutter />
              <Gutter $last>{p.plus && <SmallToggle type="button" aria-label="Expand"><TogglePlus /></SmallToggle>}</Gutter>
              <Cell $tint={p.t} $link={p.nl}>{p.n}</Cell>
              <Cell $tint={p.t} $link={p.vl} $align={p.a}>{p.v}</Cell>
              <Cell $tint={p.t} $align="center">{p.u}{p.q && <Icon name="help" size={9} />}</Cell>
            </tr>
          )))}
        </tbody>
      </PropTable>
      <VScroll>
        <button type="button" aria-label="Scroll up"><Chevron up /></button>
        <Thumb $grow={1} $fill />
        <button type="button" aria-label="Scroll down"><Chevron /></button>
      </VScroll>
    </Props>
    <TabRow $height={12}>
      <SlantTab type="button" $on><Icon name="bar" size={9} />Members</SlantTab>
    </TabRow>
    <FootTools>
      {['tree', 'flagRed', 'tee', 'layers'].map((n) => <ToolButton key={n} type="button" aria-label={n}><Icon name={n} size={11} /></ToolButton>)}
    </FootTools>
  </Side>
);

/* ---------- model view ---------- */

const ViewArea = styled.section`
  position: relative;
  display: grid;
  grid-template-columns: 1fr 11px;
  grid-template-rows: 15px 1fr 12px;
  flex: 1;
  min-width: 0;
  margin-left: 4px;
  border-left: 1px solid #666;
`;

const ViewTabs = styled.div`
  display: flex;
  border-bottom: 1px solid #7fa3b8;
`;

const ViewTab = styled.button`
  padding: 0 ${(p) => (p.$on ? 10 : 8)}px 0 5px;
  line-height: 13px;
  background: ${(p) => (p.$on ? '#fff' : '#d9e9f7')};
  & + & { height: 13px; align-self: flex-end; }
`;

const Scene = styled.div`
  position: relative;
  overflow: hidden;
  background: linear-gradient(#e1f9fe, #cde0f5 40%, #c4dcf0 56%, #b3c5e9);
  border-right: 1px solid #557;
`;

const SceneSvg = styled.svg`
  display: block;
  width: 100%;
  height: 100%;
  font-family: ${wide};
  font-size: 14px;
`;

const Hourglass = styled.svg`
  position: absolute;
  left: 128px;
  top: 2px;
`;

const AxisBox = styled.div`
  position: absolute;
  left: 2px;
  bottom: 1px;
  width: 78px;
  height: 78px;
  background: #bccae9;
  border: 1px solid #a9bbdc;
  border-right: 2px solid #56627d;
  border-bottom: 2px solid #56627d;
`;

const Legend = styled.div`
  position: absolute;
  right: 20px;
  bottom: 17px;
  display: flex;
  flex-direction: column;
  color: #d4112f;
  font-family: ${wide};
  font-size: 14px;
  line-height: 18px;
`;

const LegendRow = styled.div`
  display: flex;
  align-items: center;
  gap: 5px;
  height: 17px;
  white-space: pre;
`;

const Cases = styled.div`
  text-align: right;
  margin-top: 19px;
`;

const StoryBar = styled.div`
  position: absolute;
  left: 386px;
  bottom: 0;
  display: flex;
  width: 254px;
  height: 13px;
  line-height: 13px;
  background: linear-gradient(#fcfcfc, #dcdcdc);
  font-family: ${classic};
  > * { border-right: 1px solid #aaa; }
  button { flex: 0 0 13px; display: flex; align-items: center; justify-content: center; }
`;

const StoryMode = styled.b`
  flex: 0 0 55px;
  text-align: center;
`;

const StoryText = styled.span`
  flex: 1;
  padding-left: 7px;
`;

const ViewGhost = styled.div`
  position: absolute;
  right: 0;
  bottom: 1px;
  width: 76px;
  line-height: 11px;
  text-align: center;
  color: #8299bd;
  background: #b7cce9;
`;

const TabsStrip = styled.button`
  position: absolute;
  right: 204px;
  top: 0;
  width: 16px;
  height: 97px;
  padding-top: 1px;
  display: flex;
  flex-direction: column;
  align-items: center;
  gap: 3px;
  background: #f6fafc;
  font-family: ${wide};
  font-size: 8px;
  span { writing-mode: vertical-rl; transform: rotate(180deg); }
`;

const nodeLabels = [
  [6, 470, 170], [7, 507, 177], [8, 544, 185], [9, 581, 192], [11, 622, 198], [13, 659, 205], [14, 697, 212], [16, 734, 219], [18, 770, 226],
  [6, 507, 217], [7, 543, 224], [9, 580, 231], [12, 660, 245], [14, 696, 251], [16, 733, 258], [5, 470, 236],
  [5, 506, 257], [6, 543, 264], [8, 580, 271], [10, 622, 264], [11, 658, 285], [13, 695, 291], [15, 733, 298], [17, 770, 292],
  [3, 468, 318], [4, 506, 296], [6, 543, 303], [7, 579, 310], [8, 617, 330], [10, 658, 324], [12, 695, 331], [14, 732, 338],
  [4, 505, 336], [5, 542, 343], [6, 579, 350], [10, 658, 363], [12, 694, 370], [2, 467, 367],
  [3, 505, 375], [4, 542, 382], [5, 578, 389], [7, 616, 396], [9, 652, 404], [11, 693, 409], [13, 730, 417], [15, 769, 374], [14, 768, 424],
];

const Model = () => (
  <SceneSvg viewBox="163 109 1082 546" preserveAspectRatio="xMinYMin meet" aria-label="Billboard model">
    <defs>
      <linearGradient id="pipe">
        <stop offset="0" stopColor="#c0c578" />
        <stop offset=".28" stopColor="#c8cd7a" />
        <stop offset=".32" stopColor="#dbe288" />
        <stop offset=".6" stopColor="#e9f18f" />
        <stop offset=".65" stopColor="#f4fc99" />
        <stop offset="1" stopColor="#f6fd9c" />
      </linearGradient>
    </defs>
    <g stroke="#99a" fill="none" strokeDasharray="5 2">
      <path d="M1214 135l13-4v36l-12 7M1223 150v16" />
    </g>
    <ellipse cx="462" cy="618" rx="7" ry="3" fill="#5c78b8" />
    <path d="M443 178v434c6 7 34 7 40 0V178Z" fill="url(#pipe)" />
    <path d="M450 182v434M456 183v434M462 184v434M468 184v434" stroke="#b9bf6c" strokeWidth=".6" />
    <path d="M443 612c6 7 34 7 40 0V386" stroke="#cfd22e" fill="none" />
    <ellipse cx="463" cy="178" rx="20" ry="6" fill="#f0f8a8" stroke="#b9bd20" />
    <path d="M480 188l263 53v184l-263-52Z" fill="#a5b0c0" />
    <g fill="#1d1ce0" stroke="#1512b8" strokeWidth=".7">
      <path d="M597 205h18v206h-18Z" />
      <path d="M476 276l6-3 261 51 7 5v14l-274-54Z" />
      <path d="M476 374l6-3 268 52v19l-274-54Z" />
      <path d="M459 173l6-5 293 58v20l-15-2-267-52v-8l-17-1Z" />
      <path d="M743 236l15-8 6 6v196l-6 8-8 4-7-4Z" />
    </g>
    <g stroke="#3f3cff" strokeWidth=".7" fill="none">
      <path d="M459 173l289 58M476 279l267 53M476 377l272 54M754 238v200" />
      <path d="M749 330v13M599 210h11v97h-11ZM600 312h10v90h-10Z" />
    </g>
    <path d="M750 236h3v2h-3Z" fill="#fff" />
    <path d="M763 232h3v3h-3Z" fill="#e02020" />
    <g textAnchor="middle" fill="#0a0a14">
      {nodeLabels.map(([n, x, y], i) => (
        <text key={i} x={x} y={y + 5} transform={`rotate(-6 ${x} ${y})`}>{n}</text>
      ))}
    </g>
  </SceneSvg>
);

const BottomStrip = styled.div`
  display: flex;
  align-items: stretch;
  grid-column: 1 / -1;
  background: #f4f4f4;
  > button { flex: 0 0 11px; }
`;

const StripTools = styled.div`
  display: flex;
  flex: none;
  button { flex: 0 0 15px; border: 1px solid #9aa; background: #f7fafb; }
`;

const HTrack = styled.div`
  display: flex;
  flex: 1;
`;

const HThumb = styled.div`
  flex: ${(p) => p.$grow};
  background: ${(p) => (p.$fill ? '#bfbfbf' : 'transparent')};
`;

const RightRail = styled.div`
  flex: 0 0 22px;
  background: #fff;
  border-left: 1px solid #ddd;
`;

const RailTools = styled.div`
  display: flex;
  flex-direction: column;
  gap: 4px;
  height: 386px;
  padding-top: 3px;
  background: #f3f3f3;
  border-top: 1px dotted #aaa;
  border-bottom: 1px solid #bbb;
`;

/* ---------- diagrams window ---------- */

const DialogBox = styled.section`
  position: absolute;
  right: 36px;
  top: 13px;
  width: 175px;
  padding: 0 4px 2px;
  background: #f0f0f0;
  border: 1px solid #8d9aa5;
  box-shadow: 1px 2px 5px rgba(0, 0, 0, 0.35);
  font-family: ${dialogFont};
  font-size: 7px;
  line-height: 9px;
  white-space: nowrap;
`;

const DialogTitle = styled.div`
  display: flex;
  align-items: center;
  gap: 4px;
  height: 18px;
  margin: 0 -4px 5px;
  padding: 0 11px 0 5px;
  background: #fff;
  color: #8c8c8c;
  font-family: ${ui};
  font-size: 8px;
  button { flex: 0 0 26px; text-align: right; }
  span { flex: 1; }
`;

const DialogTabs = styled.div`
  display: flex;
  align-items: flex-end;
  height: 15px;
`;

const DialogTab = styled.button`
  flex: 0 0 ${(p) => p.$width}px;
  height: ${(p) => (p.$on ? 15 : 13)}px;
  overflow: hidden;
  border: 1px solid #d8d8d8;
  border-bottom: 0;
  background: ${(p) => (p.$on ? '#fff' : p.$hot ? '#d8ebf9' : '#f0f0f0')};
`;

const TabArrow = styled.button`
  flex: 0 0 10px;
  height: 11px;
  align-self: center;
  display: flex;
  align-items: center;
  justify-content: center;
  border: 1px solid #aaa;
  background: #f4f4f4;
`;

const DialogBody = styled.div`
  background: #fff;
  border: 1px solid #dcdcdc;
  padding: 25px 5px 2px 9px;
`;

const Box = styled.fieldset`
  min-width: 0;
  margin: 0 0 ${(p) => p.$after}px;
  padding: ${(p) => p.$top}px 9px 0 4px;
  height: ${(p) => p.$height}px;
  border: 1px solid #dcdcdc;
  legend { padding: 0 1px; line-height: 9px; }
`;

const CheckLine = styled.label`
  display: flex;
  align-items: center;
  gap: 2px;
  height: ${(p) => p.$height || 15}px;
`;

const Swatch = styled.i`
  width: 10px;
  height: 11px;
  background: ${(p) => p.$color};
`;

const Check = styled.input`
  appearance: none;
  flex: 0 0 9px;
  width: 9px;
  height: 9px;
  border: 1px solid #444;
  background: #fff;
`;

const CheckMark = styled.span`
  position: relative;
  display: flex;
  svg { position: absolute; left: 1px; top: 1px; }
`;

const FieldLine = styled.div`
  display: flex;
  align-items: center;
  gap: ${(p) => p.$gap || 0}px;
  height: ${(p) => p.$height}px;
  padding-left: ${(p) => p.$indent || 1}px;
  label { flex: ${(p) => (p.$fill ? 1 : 'none')}; }
`;

const NumberInput = styled.input`
  width: ${(p) => p.$width}px;
  height: 13px;
  padding: 0 ${(p) => (p.$right ? 3 : 4)}px;
  text-align: ${(p) => (p.$right ? 'right' : 'left')};
  border: 1px solid #777;
  background: #fff;
`;

const Spin = styled.span`
  display: flex;
  border: 1px solid #999;
  ${NumberInput} { border: 0; height: 12px; }
`;

const SpinButtons = styled.span`
  display: flex;
  flex-direction: column;
  button { flex: 1; display: flex; align-items: center; justify-content: center; width: 10px; background: #eee; border: 1px solid #bbb; }
`;

const PushButton = styled.button`
  flex: 0 0 ${(p) => p.$width || 49}px;
  width: ${(p) => p.$width || 49}px;
  height: 14px;
  background: #e3e3e3;
  border: 1px solid #b0b0b0;
  ${(p) => p.$default && css`
    border-color: #0a74d6;
    box-shadow: inset 0 0 0 1px #5fa6e4;
  `}
`;

const ButtonLine = styled.div`
  display: flex;
  align-items: center;
  justify-content: space-between;
  height: 16px;
  padding: 0 1px 0 5px;
`;

const BodyButtons = styled(ButtonLine)`
  padding: 0;
  margin: 0 -4px;
`;

const SizeLine = styled.div`
  display: flex;
  align-items: center;
  justify-content: flex-end;
  gap: 9px;
  height: 21px;
  padding-right: 5px;
`;

const CheckPair = styled.div`
  display: grid;
  grid-template-columns: 90px 1fr;
  padding: 0 0 2px 7px;
`;

const Arrow = ({ d }) => (
  <svg width="4" height="4" viewBox="0 0 4 4" aria-hidden="true"><path d={d} fill="#111" /></svg>
);

const DiagramsDialog = () => (
  <DialogBox role="dialog" aria-label="Diagrams">
    <DialogTitle>
      <svg width="11" height="10" viewBox="0 0 11 10"><path d="M0 0h11v10H0Z" fill="#e4d6dc" /><path d="M0 1c3 5 6 5 11 0v3c-4 3-8 3-11 0Z" fill="#2737a2" /><path d="M0 9c3-4 7-4 11-1v2H0Z" fill="#d13340" /></svg>
      <span>Diagrams</span>
      <button type="button" aria-label="Minimize dialog"><Glyph kind="min" /></button>
      <button type="button" aria-label="Maximize dialog" disabled><Glyph kind="max" width={0.5} /></button>
      <button type="button" aria-label="Close dialog"><Glyph kind="close" /></button>
    </DialogTitle>
    <DialogTabs>
      <DialogTab type="button" $width={27} $hot>NTM</DialogTab>
      <DialogTab type="button" $width={50} $on>Deformation</DialogTab>
      <DialogTab type="button" $width={34}>Stresses</DialogTab>
      <DialogTab type="button" $width={35}>Reactions</DialogTab>
      <TabArrow type="button" aria-label="Previous tabs"><Arrow d="M3 0v4L1 2Z" /></TabArrow>
      <TabArrow type="button" aria-label="Next tabs"><Arrow d="M1 0v4l2-2Z" /></TabArrow>
    </DialogTabs>
    <DialogBody>
      <Box $height={92} $top={4} $after={2}>
        <CheckLine>
          <Swatch $color="#7b3238" />
          <CheckMark>
            <Check type="checkbox" defaultChecked />
            <svg width="7" height="7" viewBox="0 0 7 7" aria-hidden="true"><path d="M1 3l2 2 3-4" stroke="#222" fill="none" /></svg>
          </CheckMark>
          Deformation
        </CheckLine>
        <CheckLine><Swatch $color="#f77e3c" /><Check type="checkbox" />Exact deformation for members</CheckLine>
        <CheckLine $height={24}><Check type="checkbox" />Deformation in structure scale</CheckLine>
        <FieldLine $height={9} $gap={6}><label htmlFor="scale">Diagram scale for 1</label><span>(cm)</span></FieldLine>
        <FieldLine $height={18} $gap={13} $indent={12}>
          <NumberInput id="scale" $width={66} $right defaultValue="25" />
          <span>(mm)</span>
        </FieldLine>
      </Box>
      <Box $height={61} $top={0} $after={13}>
        <legend>Animation</legend>
        <FieldLine $height={13} $fill><label htmlFor="frames">Number of frames:</label><NumberInput id="frames" $width={28} defaultValue="10" /></FieldLine>
        <FieldLine $height={19} $fill>
          <label htmlFor="fps">Number of frames/second:</label>
          <Spin>
            <NumberInput id="fps" $width={16} defaultValue="8" />
            <SpinButtons>
              <button type="button" aria-label="More"><Arrow d="M0 3h4L2 1Z" /></button>
              <button type="button" aria-label="Fewer"><Arrow d="M0 1h4L2 3Z" /></button>
            </SpinButtons>
          </Spin>
        </FieldLine>
        <FieldLine $height={17} $indent={3}><PushButton type="button">Start</PushButton></FieldLine>
      </Box>
      <BodyButtons>
        <PushButton type="button">All</PushButton>
        <PushButton type="button">None</PushButton>
        <PushButton type="button" $default>Normalize</PushButton>
      </BodyButtons>
    </DialogBody>
    <SizeLine>
      <span>Diagram size:</span>
      <PushButton type="button" $width={15}>+</PushButton>
      <PushButton type="button" $width={15}>--</PushButton>
    </SizeLine>
    <CheckPair>
      <CheckLine $height={11}><Check type="checkbox" />Open a new window</CheckLine>
      <CheckLine $height={11}><Check type="checkbox" />Constant scale</CheckLine>
    </CheckPair>
    <ButtonLine>
      <PushButton type="button">Apply</PushButton>
      <PushButton type="button">Close</PushButton>
      <PushButton type="button">Help</PushButton>
    </ButtonLine>
  </DialogBox>
);

const ViewPane = () => (
  <ViewArea>
    <ViewTabs>
      <ViewTab type="button" $on>View</ViewTab>
      <ViewTab type="button">Plan</ViewTab>
    </ViewTabs>
    <VScroll>
      <button type="button" aria-label="Scroll view up"><Chevron up /></button>
    </VScroll>
    <Scene>
      <Model />
      <TabsStrip type="button">
        <svg width="10" height="10" viewBox="0 0 10 10"><path d="M0 5l5-5v3h5v4H5v3Z" fill="#0a2fa8" /></svg>
        <span>tabs</span>
      </TabsStrip>
      <AxisBox>
        <svg width="76" height="76" viewBox="0 0 76 76" fontFamily="Open Sans" fontSize="12" fontWeight="600">
          <path d="M28 48V27" stroke="#e52c33" strokeWidth="3" /><path d="M24 29l4-8 5 8Z" fill="#e52c33" />
          <path d="M29 47l9-5" stroke="#2f8a45" strokeWidth="2" /><path d="M36 39l7-1-5 6Z" fill="#2f8a45" />
          <path d="M29 48l14 3" stroke="#2d37e0" strokeWidth="3" /><path d="M44 46l9 7-10 2Z" fill="#2d37e0" />
          <text x="28" y="20" fill="#d5363c">Z</text>
          <text x="43" y="39" fill="#2f8a45">Y</text>
          <text x="54" y="53" fill="#2d37d0">X</text>
        </svg>
      </AxisBox>
      <Legend>
        <LegendRow><svg width="46" height="3"><path d="M0 1.500h46" stroke="#efb4c4" strokeWidth="2" /></svg>RHSS 200x200x12.5</LegendRow>
        <LegendRow><svg width="46" height="3"><path d="M0 1.500h46" stroke="#b8b81f" strokeWidth="2" /></svg>Ø500</LegendRow>
        <LegendRow><svg width="46" height="8"><path d="M36 1v5h9V1" stroke="#ee8a52" strokeWidth="2" fill="none" /></svg>Dis  10mm</LegendRow>
        <LegendRow><svg width="46" height="3" />Max=18</LegendRow>
        <Cases>Cases: 5 (SLS)</Cases>
      </Legend>
      <StoryBar>
        <StoryMode>3D</StoryMode>
        <StoryText><b>Z = 3.00 m</b> - <i>Story 1</i></StoryText>
        <button type="button" aria-label="Story up"><Arrow d="M0 4h4L2 0Z" /></button>
        <button type="button" aria-label="Story down"><Arrow d="M0 0h4L2 4Z" /></button>
      </StoryBar>
      <ViewGhost>View</ViewGhost>
    </Scene>
    <VScroll>
      <Thumb $grow={203} />
      <Thumb $grow={122} $fill />
      <Thumb $grow={212} />
      <button type="button" aria-label="Scroll view down"><Chevron /></button>
    </VScroll>
    <BottomStrip>
      <StripTools>
        {['labelN', 'labelLine', 'labelNum', 'home', 'solidYellow', 'axesYellow', 'slabYellow', 'lineYellow', 'numYellow', 'swap'].map((n) => (
          <ToolButton key={n} type="button" aria-label={n}><Icon name={n} size={11} /></ToolButton>
        ))}
      </StripTools>
      <Gap $width={7} />
      <button type="button" aria-label="Scroll left"><Arrow d="M3 0v4L1 2Z" /></button>
      <HTrack>
        <HThumb $grow={238} />
        <HThumb $grow={378} $fill />
        <HThumb $grow={238} />
      </HTrack>
      <button type="button" aria-label="Scroll right"><Arrow d="M1 0v4l2-2Z" /></button>
      <Gap $width={5} />
      <StripTools>
        {['spider', 'wave', 'eye'].map((n) => <ToolButton key={n} type="button" aria-label={n}><Icon name={n} size={11} /></ToolButton>)}
      </StripTools>
      <Gap $width={12} />
    </BottomStrip>
    <DiagramsDialog />
    <Hourglass width="10" height="14" viewBox="0 0 10 14"><path d="M1 0h8v3L6 7l3 4v3H1v-3l3-4-3-4Z" fill="#000" /><path d="M3 3h4L5 5Z" fill="#fff" /></Hourglass>
  </ViewArea>
);

const Rail = () => (
  <RightRail>
    <RailTools>
      <Tools vertical length={115} names={['gridAxes', 'beamH', 'colV', 'plate', 'wall', 'wallHole']} />
      <Tools vertical length={39} names={['openBox', 'ibeam']} />
      <Tools vertical length={20} names={['bracketRed']} />
      <Tools vertical length={42} names={['stack', 'support']} />
      <Tools vertical length={58} names={['loadA', 'loadB', 'loadC']} />
      <Tools vertical length={58} names={['copyRed', 'frameGray', 'table']} active={['frameGray']} />
      <Tools vertical length={20} names={['solid']} />
    </RailTools>
  </RightRail>
);

/* ---------- status and taskbar ---------- */

const StatusRow = styled.div`
  flex: 0 0 ${(p) => p.$height}px;
  border-top: 1px solid #d4d4d4;
  span { display: block; width: 27px; margin-left: 1px; padding-left: 2px; line-height: 12px; background: #fff; }
`;

const Taskbar = styled.footer`
  display: flex;
  align-items: center;
  flex: 0 0 27px;
  background: #484848;
  color: #fff;
`;

const TaskApps = styled.div`
  display: flex;
  flex: 0 0 524px;
  align-self: stretch;
`;

const TaskButton = styled.button`
  flex: 1;
  display: flex;
  align-items: center;
  justify-content: center;
  margin: 0 1px;
  background: ${(p) => (p.$front ? '#6b6b6b' : 'transparent')};
  border-bottom: 2px solid ${(p) => (p.$running ? '#76b9ed' : 'transparent')};
`;

const StartButton = styled.button`
  flex: 0 0 32px;
  display: flex;
  justify-content: center;
`;

const Tray = styled.div`
  display: flex;
  align-items: center;
  gap: 5px;
  flex: 0 0 308px;
  margin-left: auto;
  svg { flex: none; }
`;

const Weather = styled.span`
  display: flex;
  gap: 6px;
  flex: 0 0 90px;
  padding-left: 3px;
  font-family: ${wide};
  font-size: 9px;
  line-height: 12px;
  white-space: nowrap;
`;

const Clock = styled.time`
  flex: 0 0 38px;
  text-align: center;
  font-size: 8px;
  line-height: 12px;
  white-space: nowrap;
`;

const letter = (t, fill, size = 10) => (
  <text x="8" y="12" textAnchor="middle" fontSize={size} fontWeight="bold" fontFamily="Roboto" fill={fill}>{t}</text>
);

const apps = [
  ['FD', <><path d="M0 0h16v16H0Z" fill="#1d6fb5" stroke="#9cc8ea" />{letter('FD', '#fff', 11)}</>],
  ['Chrome', <><circle cx="8" cy="8" r="7.500" fill="#34a853" /><path d="M8 8L1.500 4.300A7.500 7.500 0 0 1 14.500 4.500H8Z" fill="#ea4335" /><path d="M8 8L14.500 4.500A7.500 7.500 0 0 1 8 15.500Z" fill="#fbbc05" /><circle cx="8" cy="8" r="3.500" fill="#fff" /><circle cx="8" cy="8" r="2.700" fill="#4285f4" /></>],
  ['Camtasia', <><path d="M0 0h16v16H0Z" fill="#5aa31b" /><path d="M13 5V3H6L3 6v4l3 3h7v-2" fill="none" stroke="#fff" strokeWidth="2.500" /></>, 1],
  ['AutoCAD', <><path d="M0 0h16v16H0Z" fill="#f5ecec" />{letter('A', '#a51c2b', 13)}</>],
  ['Autodesk', <><path d="M6 1h4L4 14H0Z" fill="#2aa58d" /><path d="M6 1h4l6 13h-4Z" fill="#2873c4" /><path d="M3 14l6-4 3 4Z" fill="#8fcf52" /></>],
  ['Snip', <><path d="M8 8C3 8 3 2 7 1.500c4-.5 6 3 4 6" fill="none" stroke="#cf4d3f" strokeWidth="2.500" /><path d="M7 4l3 11M11 5L7 15" stroke="#a9c6dc" strokeWidth="1.600" /></>],
  ['Photoshop', <><path d="M1 1h14v14H1Z" fill="#04202e" stroke="#35b6e8" />{letter('Ps', '#35b6e8', 9)}</>],
  ['Idea', <><path d="M0 0h16v16H0Z" fill="#ea6a25" /><path d="M7 5h6l-2 6H5ZM4 5l-2 6M10 5l-1 3" stroke="#fff" fill="none" strokeWidth="1.500" /></>],
  ['Mathcad', <><path d="M0 0h16v16H0Z" fill="#fff" />{letter('M', '#e8a21a', 13)}</>],
  ['Pencil', <><path d="M8 1l4 10-2 4H6l-2-4Z" fill="#e7cdbb" /><path d="M8 1l1.500 4h-3Z" fill="#333" /><path d="M8 9l4 2-2 4H6Z" fill="#b53a2a" /></>],
  ['Audacity', <><path d="M1 12V8c0-9 14-9 14 0v4" fill="none" stroke="#1f23c8" strokeWidth="2.500" /><path d="M4 7h8v7H4Z" fill="#f0a11d" /><path d="M4 10h8" stroke="#d6361d" strokeWidth="2" /></>],
  ['Spotify', <><circle cx="8" cy="8" r="8" fill="#1ed760" /><path d="M3.500 5.500c3-1 6-.6 9 1M4 8.300c3-1 5-.5 7.500.9M4.500 11c2-.6 4-.4 6 .7" stroke="#17351f" fill="none" strokeWidth="1.400" strokeLinecap="round" /></>, 1],
  ['Settings', <><circle cx="8" cy="8" r="4" fill="none" stroke="#fff" strokeWidth="2.200" /><path d="M8 1.500v2.500M8 12v2.500M1.500 8H4M12 8h2.500M3.500 3.500L5 5M11 11l1.500 1.500M12.500 3.500L11 5M5 11l-1.500 1.500" stroke="#fff" strokeWidth="2" /></>, 1],
  ['Monitor', <><path d="M1 3h14v10H1Z" fill="#6fc5ee" /><path d="M9 5h5v7H9Z" fill="#2e8fd0" /><circle cx="5" cy="6" r="2" fill="#fff" /><path d="M3 10h5M10 7h3M10 10h3" stroke="#fff" /></>, 1],
  ['Robot', <><path d="M0 0h16v16H0Z" fill="#fae3a4" /><path d="M4 2h5c4 0 4 5 1 6l2 5H9L7 8v5H4Z" fill="#d98e18" /><path d="M10 14h3" stroke="#555" /></>, 1, 1],
  ['Recorder', <><path d="M0 0h16v16H0Z" fill="#ee4b3c" /><path d="M13 5V3H6L3 6v4l3 3h7v-2" fill="none" stroke="#fff" strokeWidth="2.500" /></>, 1],
];

const trayIcons = [
  'M1 7l4-4 4 4',
  'M1 3h6v5H1ZM7 5l2-1v4L7 7M2 1h4M2 10h4',
  'M4 1h2v5H4ZM2 5c0 4 6 4 6 0M5 8v2',
  'M2 3h7v5H2ZM0 1h3v3M3 5h5M3 6h5',
  'M1 9C2 5 5 2 9 1M4 9c0-3 3-5 5-5M7 9c0-1 1-2 2-2',
  'M1 4h2l2-2v7L3 7H1ZM7 4v3M9 2v7',
];

const WindowsTaskbar = () => (
  <Taskbar>
    <StartButton type="button" aria-label="Start">
      <svg width="12" height="12" viewBox="0 0 12 12"><path d="M0 2l5-1v4.500H0ZM6 1l6-1v5.500H6ZM0 6.500h5V11l-5-1ZM6 6.500h6V12l-6-1Z" fill="#fff" /></svg>
    </StartButton>
    <TaskApps>
      {apps.map(([name, art, running, front]) => (
        <TaskButton key={name} type="button" aria-label={name} $running={running} $front={front}>
          <svg width="16" height="16" viewBox="0 0 16 16" aria-hidden="true">{art}</svg>
        </TaskButton>
      ))}
    </TaskApps>
    <Tray>
      <svg width="13" height="12" viewBox="0 0 13 12"><circle cx="5" cy="4" r="3.500" fill="#f6c93b" /><path d="M3 11c-3-1-2-5 1-4 1-3 5-3 6 0 3 0 3 4 0 4Z" fill="#e6edf3" /></svg>
      <Weather><span>60°F</span><span>Mostly cloudy</span></Weather>
      {trayIcons.map((d) => (
        <svg key={d} width="11" height="11" viewBox="0 0 10 11" aria-hidden="true"><path d={d} fill="none" stroke="#eee" /></svg>
      ))}
      <span>NOB</span>
      <Clock>3:18 PM<br />7/9/2021</Clock>
      <Gap $width={1} />
      <svg width="13" height="12" viewBox="0 0 13 12"><path d="M1 1h11v8H7l-2 2V9H1Z" fill="#fff" /><path d="M3 3.500h7M3 6h7" stroke="#484848" /></svg>
    </Tray>
  </Taskbar>
);

const App = () => (
  <Page>
    <GlobalStyle />
    <AppHeader />
    <Toolbars />
    <Workspace>
      <SidePanel />
      <ViewPane />
      <Rail />
    </Workspace>
    <StatusRow $height={14}><span>View</span></StatusRow>
    <StatusRow $height={12} />
    <WindowsTaskbar />
  </Page>
);

export default App;
